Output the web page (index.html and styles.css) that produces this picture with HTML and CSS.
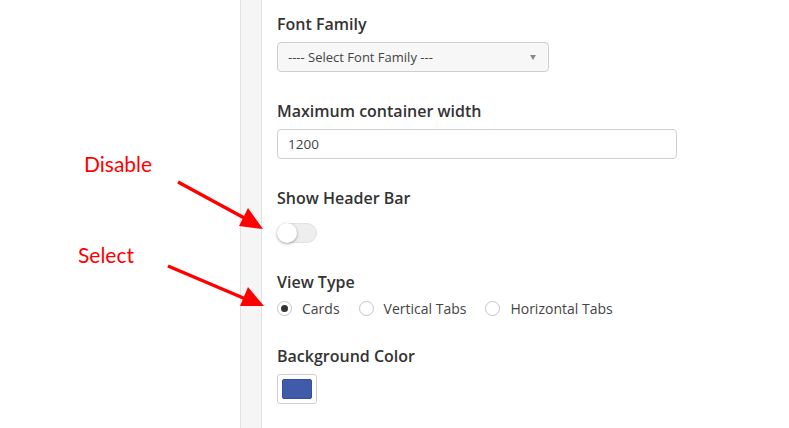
FILE: index.html
```html
<!DOCTYPE html>
<html lang="en">
<head>
  <meta charset="UTF-8" />
  <title>Layout Settings</title>
  <link rel="stylesheet" href="styles.css">
</head>
<body>
  <div class="page">
    <div class="gutter">
      <span class="note note-disable">Disable</span>
      <span class="note note-select">Select</span>
    </div>
    <div class="rail"></div>

    <form class="settings">
      <div class="field">
        <label class="field-label">Font Family</label>
        <div class="select-box">
          <span>---- Select Font Family ---</span>
          <span class="caret"></span>
        </div>
      </div>

      <div class="field">
        <label class="field-label">Maximum container width</label>
        <div class="text-input">1200</div>
      </div>

      <div class="field">
        <label class="field-label">Show Header Bar</label>
        <div class="toggle"><span class="knob"></span></div>
      </div>

      <div class="field">
        <label class="field-label">View Type</label>
        <div class="radio-row">
          <span class="radio checked"></span><span class="radio-text">Cards</span>
          <span class="radio"></span><span class="radio-text">Vertical Tabs</span>
          <span class="radio"></span><span class="radio-text">Horizontal Tabs</span>
        </div>
      </div>

      <div class="field">
        <label class="field-label">Background Color</label>
        <div class="swatch"><span class="swatch-fill"></span></div>
      </div>
    </form>

    <!-- red pointer arrows -->
    <svg class="arrows" width="789" height="428" viewBox="0 0 789 428">
      <g fill="#ff0000" stroke="#ff0000">
        <line x1="178" y1="182" x2="248" y2="220" stroke-width="3.5" />
        <polygon points="263,229 239,226 248,208" stroke="none" />
        <line x1="168" y1="266" x2="248" y2="300" stroke-width="3.5" />
        <polygon points="264,306 240,306 248,287" stroke="none" />
      </g>
    </svg>
  </div>
</body>
</html>
```

FILE: styles.css
```css
html {
  box-sizing: border-box;
}
*, *:before, *:after {
  box-sizing: inherit;
}

body {
  margin: 0;
  background: #fff;
  font-family: 'Open Sans', 'Noto Sans', sans-serif;
  color: #333;
}

.page {
  position: relative;
  display: flex;
  width: 789px;
  height: 428px;
  overflow: hidden;
}

.gutter {
  width: 240px;
  flex-shrink: 0;
}

.rail {
  width: 22px;
  flex-shrink: 0;
  background: #f5f5f5;
  border-left: 1px solid #e2e2e2;
  border-right: 1px solid #e2e2e2;
}

/* Annotations */
.note {
  position: absolute;
  color: #ff0000;
  font-family: Lato, 'Liberation Sans', sans-serif;
  font-size: 21px;
  line-height: 24px;
}
.note-disable {
  left: 84px;
  top: 152px;
}
.note-select {
  left: 78px;
  top: 243px;
}

.arrows {
  position: absolute;
  left: 0;
  top: 0;
  pointer-events: none;
}

/* Form */
.settings {
  padding: 14px 0 0 15px;
}

.field {
  margin-bottom: 29px;
}

.field-label {
  display: block;
  font-size: 16px;
  font-weight: 600;
  line-height: 20px;
  margin-bottom: 8px;
  color: #333;
}

.select-box {
  display: flex;
  align-items: center;
  justify-content: space-between;
  width: 272px;
  height: 30px;
  padding: 0 10px 0 10px;
  background: #f7f7f7;
  border: 1px solid #cfcfcf;
  border-radius: 4px;
  font-size: 13px;
  color: #444;
}

.caret {
  width: 0;
  height: 0;
  border-left: 3.5px solid transparent;
  border-right: 3.5px solid transparent;
  border-top: 5px solid #888;
  margin-right: 2px;
}

.text-input {
  display: flex;
  align-items: center;
  width: 400px;
  height: 30px;
  padding: 0 10px;
  border: 1px solid #cfcfcf;
  border-radius: 4px;
  font-size: 13.5px;
  color: #444;
}

/* margin collapses with the label's, so this sets the full gap */
.toggle {
  position: relative;
  width: 40px;
  height: 20px;
  margin-top: 15px;
  border-radius: 10px;
  background: #eee;
  border: 1px solid #e2e2e2;
}
.knob {
  position: absolute;
  left: -1px;
  top: -1px;
  width: 20px;
  height: 20px;
  border-radius: 50%;
  background: #fff;
  box-shadow: 0 1px 3px rgba(0, 0, 0, 0.35);
}

.radio-row {
  display: flex;
  align-items: center;
  height: 17px;
  font-size: 14px;
  color: #444;
}
.radio {
  position: relative;
  width: 15px;
  height: 15px;
  border-radius: 50%;
  border: 1px solid #c4c4c4;
  background: #fff;
  margin-right: 10px;
}
.radio.checked:after {
  content: "";
  position: absolute;
  left: 3px;
  top: 3px;
  width: 7px;
  height: 7px;
  border-radius: 50%;
  background: #333;
}
.radio-text {
  margin-right: 19px;
}

.swatch {
  width: 40px;
  height: 30px;
  padding: 4px;
  border: 1px solid #cfcfcf;
  border-radius: 3px;
  background: #fff;
}
.swatch-fill {
  display: block;
  width: 100%;
  height: 100%;
  border-radius: 2px;
  background: #3f5ba9;
  border: 1px solid #34509c;
}
```
